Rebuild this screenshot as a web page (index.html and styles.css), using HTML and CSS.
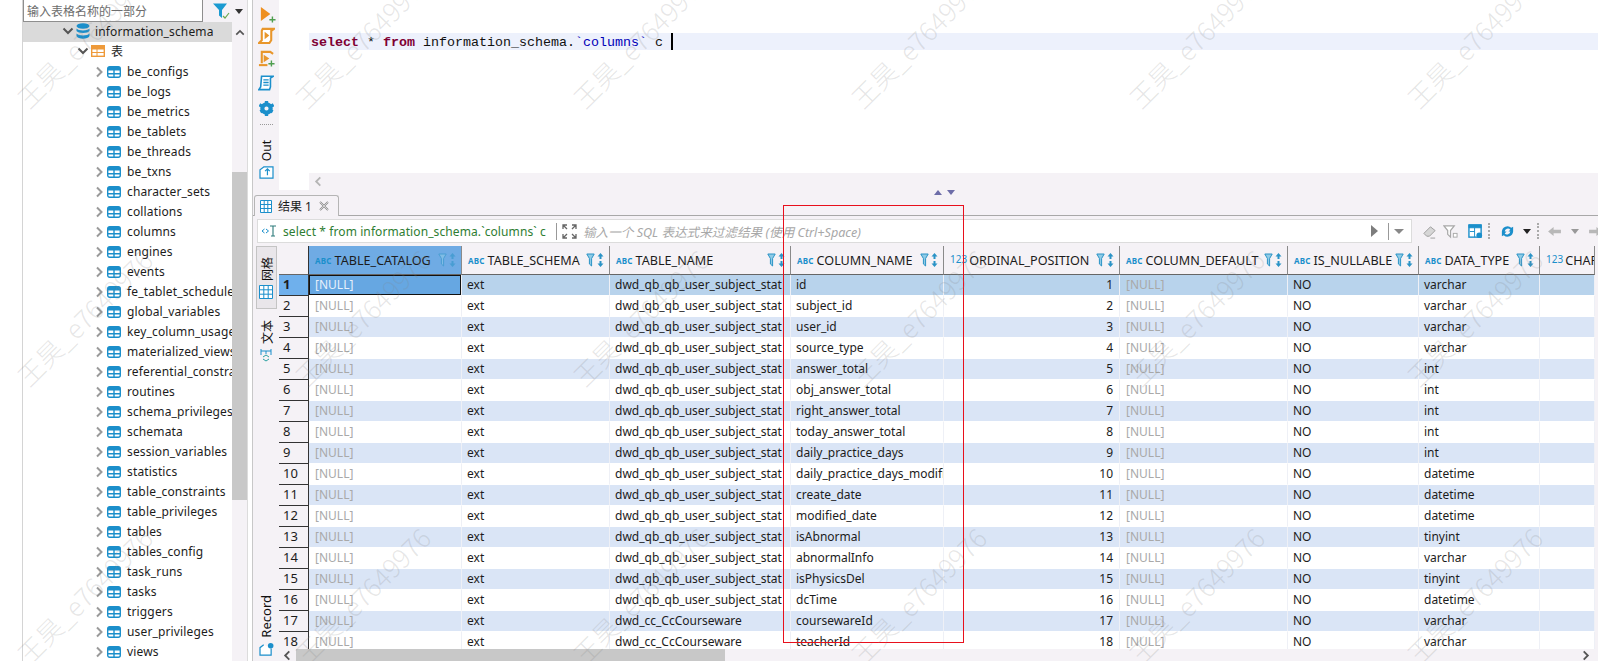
FILE: index.html
```html
<!DOCTYPE html>
<html lang="zh">
<head>
<meta charset="utf-8">
<title>information_schema.columns</title>
<link rel="stylesheet" href="styles.css">
</head>
<body>
<svg class="defs" aria-hidden="true">
  <symbol id="chev" viewBox="0 0 8 12"><path d="M2 1.500 6.500 6 2 10.500" fill="none" stroke="#9a9a9a" stroke-width="2"/></symbol>
  <symbol id="chevd" viewBox="0 0 12 8"><path d="M1.500 1.500 6 6l4.500-4.500" fill="none" stroke="#555" stroke-width="2"/></symbol>
  <symbol id="tbl" viewBox="0 0 14 12"><rect x=".7" y=".7" width="12.600" height="10.600" rx="2" fill="#fff" stroke="#1b8fcb" stroke-width="1.400"/><path d="M1 1h12v3.500H1z" fill="#1b8fcb"/><path d="M1 7.700h12M7 4v7" stroke="#1b8fcb" stroke-width="1.400"/></symbol>
  <symbol id="flt" viewBox="0 0 9 14"><path d="M.8 1h7.400L5.600 5.500V13L3.400 11V5.500z" fill="#8fcbe6" stroke="#2a93c6"/></symbol>
  <symbol id="srt" viewBox="0 0 7 14"><path d="M3.500 0 6.500 3.500h-2v2.500h-2V3.500h-2z" fill="#2a93c6"/><path d="M3.500 14 .5 10.500h2V8h2v2.500h2z" fill="#2a93c6"/></symbol>
</svg>

<div class="app">
  <div class="rail"></div>

  <aside class="nav">
    <div class="nav-search">
      <input class="search" type="text" placeholder="输入表格名称的一部分">
      <svg class="i-filter" viewBox="0 0 18 18"><path d="M1 1.500h14L10 8v8L7 13.500V8z" fill="#1b9ad1"/><path d="M11 14l2 2 4-5" fill="none" stroke="#6aa84f" stroke-width="1.200"/></svg>
      <span class="caret-down"></span>
    </div>
    <div class="nav-body">
      <ul class="tree">
        <li class="tree-db">
          <svg class="i-chev-d"><use href="#chevd"/></svg>
          <svg class="i-db" viewBox="0 0 14 16"><ellipse cx="7" cy="3" rx="6.500" ry="2.800" fill="#1b8fcb"/><path d="M.5 5.500C2 8 12 8 13.500 5.500V8C12 10.500 2 10.500 .5 8zM.5 10.500C2 13 12 13 13.500 10.500V13C12 16.500 2 16.500 .5 13z" fill="#1b8fcb"/></svg>
          information_schema
        </li>
        <li class="tree-group">
          <svg class="i-chev-d"><use href="#chevd"/></svg>
          <svg class="i-folder" viewBox="0 0 14 12"><rect x=".7" y=".7" width="12.600" height="10.600" fill="#fff" stroke="#ee9a3a" stroke-width="1.400"/><path d="M1 1h12v3H1zM1 7.500h12M6 4v7" fill="#ee9a3a" stroke="#ee9a3a"/></svg>
          表
        </li>
        <li><svg class="i-chev"><use href="#chev"/></svg><svg class="i-tbl"><use href="#tbl"/></svg>be_configs</li>
        <li><svg class="i-chev"><use href="#chev"/></svg><svg class="i-tbl"><use href="#tbl"/></svg>be_logs</li>
        <li><svg class="i-chev"><use href="#chev"/></svg><svg class="i-tbl"><use href="#tbl"/></svg>be_metrics</li>
        <li><svg class="i-chev"><use href="#chev"/></svg><svg class="i-tbl"><use href="#tbl"/></svg>be_tablets</li>
        <li><svg class="i-chev"><use href="#chev"/></svg><svg class="i-tbl"><use href="#tbl"/></svg>be_threads</li>
        <li><svg class="i-chev"><use href="#chev"/></svg><svg class="i-tbl"><use href="#tbl"/></svg>be_txns</li>
        <li><svg class="i-chev"><use href="#chev"/></svg><svg class="i-tbl"><use href="#tbl"/></svg>character_sets</li>
        <li><svg class="i-chev"><use href="#chev"/></svg><svg class="i-tbl"><use href="#tbl"/></svg>collations</li>
        <li><svg class="i-chev"><use href="#chev"/></svg><svg class="i-tbl"><use href="#tbl"/></svg>columns</li>
        <li><svg class="i-chev"><use href="#chev"/></svg><svg class="i-tbl"><use href="#tbl"/></svg>engines</li>
        <li><svg class="i-chev"><use href="#chev"/></svg><svg class="i-tbl"><use href="#tbl"/></svg>events</li>
        <li><svg class="i-chev"><use href="#chev"/></svg><svg class="i-tbl"><use href="#tbl"/></svg>fe_tablet_schedule</li>
        <li><svg class="i-chev"><use href="#chev"/></svg><svg class="i-tbl"><use href="#tbl"/></svg>global_variables</li>
        <li><svg class="i-chev"><use href="#chev"/></svg><svg class="i-tbl"><use href="#tbl"/></svg>key_column_usage</li>
        <li><svg class="i-chev"><use href="#chev"/></svg><svg class="i-tbl"><use href="#tbl"/></svg>materialized_views</li>
        <li><svg class="i-chev"><use href="#chev"/></svg><svg class="i-tbl"><use href="#tbl"/></svg>referential_constraints</li>
        <li><svg class="i-chev"><use href="#chev"/></svg><svg class="i-tbl"><use href="#tbl"/></svg>routines</li>
        <li><svg class="i-chev"><use href="#chev"/></svg><svg class="i-tbl"><use href="#tbl"/></svg>schema_privileges</li>
        <li><svg class="i-chev"><use href="#chev"/></svg><svg class="i-tbl"><use href="#tbl"/></svg>schemata</li>
        <li><svg class="i-chev"><use href="#chev"/></svg><svg class="i-tbl"><use href="#tbl"/></svg>session_variables</li>
        <li><svg class="i-chev"><use href="#chev"/></svg><svg class="i-tbl"><use href="#tbl"/></svg>statistics</li>
        <li><svg class="i-chev"><use href="#chev"/></svg><svg class="i-tbl"><use href="#tbl"/></svg>table_constraints</li>
        <li><svg class="i-chev"><use href="#chev"/></svg><svg class="i-tbl"><use href="#tbl"/></svg>table_privileges</li>
        <li><svg class="i-chev"><use href="#chev"/></svg><svg class="i-tbl"><use href="#tbl"/></svg>tables</li>
        <li><svg class="i-chev"><use href="#chev"/></svg><svg class="i-tbl"><use href="#tbl"/></svg>tables_config</li>
        <li><svg class="i-chev"><use href="#chev"/></svg><svg class="i-tbl"><use href="#tbl"/></svg>task_runs</li>
        <li><svg class="i-chev"><use href="#chev"/></svg><svg class="i-tbl"><use href="#tbl"/></svg>tasks</li>
        <li><svg class="i-chev"><use href="#chev"/></svg><svg class="i-tbl"><use href="#tbl"/></svg>triggers</li>
        <li><svg class="i-chev"><use href="#chev"/></svg><svg class="i-tbl"><use href="#tbl"/></svg>user_privileges</li>
        <li><svg class="i-chev"><use href="#chev"/></svg><svg class="i-tbl"><use href="#tbl"/></svg>views</li>
      </ul>
      <div class="vscroll">
        <svg class="i-up" viewBox="0 0 12 8"><path d="M1.500 6.500 6 2l4.500 4.500" fill="none" stroke="#555" stroke-width="2"/></svg>
        <div class="vthumb"></div>
      </div>
    </div>
  </aside>

  <div class="splitter"></div>

  <main class="main">
    <section class="top">
      <div class="tools">
        <svg class="tool t-run" viewBox="0 0 18 18"><path d="M2 1l10 7.500L2 16z" fill="#ee8f1f"/><path d="M11 14.500h6.500M14.200 11v6.500" stroke="#4f9e4f" stroke-width="1.500"/></svg>
        <svg class="tool t-script" viewBox="0 0 18 18"><path d="M5 2h12l-3 2v10l-2 3H1l3-3V4z" fill="#fff" stroke="#e8962b" stroke-width="2.200"/><path d="M7 5l5 4-5 4z" fill="#e8962b"/></svg>
        <svg class="tool t-scriptplus" viewBox="0 0 18 18"><path d="M4 14V2h9l3 2" fill="none" stroke="#e8962b" stroke-width="2.200"/><path d="M1 16h9" stroke="#e8962b" stroke-width="2.200"/><path d="M6 5l6 4-6 4z" fill="#e8962b"/><path d="M11 14.500h6.500M14.200 11v6.500" stroke="#4f9e4f" stroke-width="1.500"/></svg>
        <svg class="tool t-doc" viewBox="0 0 18 18"><path d="M4 2h13l-3 2v10l-1 3H1l2-3z" fill="#fff" stroke="#1b8fcb" stroke-width="1.800"/><path d="M6 6h6M6 9h6M6 12h6" stroke="#1b8fcb" stroke-width="1.500"/></svg>
        <svg class="tool t-gear" viewBox="0 0 18 18"><circle cx="9" cy="9" r="5" fill="none" stroke="#1b8fcb" stroke-width="5"/><path d="M9 0v18M.5 4.500l17 9M17.500 4.500l-17 9" stroke="#1b8fcb" stroke-width="4" stroke-dasharray="3.500 11"/></svg>
        <div class="dots"></div>
        <span class="vtext v-out">Out</span>
        <svg class="tool t-out" viewBox="0 0 16 14"><path d="M5 1 1 4v9h14V1z" fill="#fff" stroke="#1b8fcb" stroke-width="1.300"/><path d="M9 10V3M6.500 5.500 9 3l2.500 2.500" fill="none" stroke="#1b8fcb" stroke-width="1.300"/></svg>
      </div>
      <div class="editor">
        <div class="ruler"></div>
        <div class="edit-col">
          <div class="code-area">
            <div class="code-line"><b class="kw">select</b> * <b class="kw">from</b> information_schema.<span class="ident">`columns`</span> c <i class="cursor"></i></div>
          </div>
          <div class="edit-scroll">
            <svg class="i-left" viewBox="0 0 8 12"><path d="M6.500 1.500 2 6l4.500 4.500" fill="none" stroke="#b5b5b5" stroke-width="2"/></svg>
          </div>
        </div>
      </div>
    </section>

    <div class="sash"><span class="sash-up"></span><span class="sash-down"></span></div>

    <section class="results">
      <div class="tabbar">
        <div class="tab">
          <svg class="i-grid" viewBox="0 0 12 13"><path d="M.5.500h11v12H.5zM.5 4.500h11M.5 8.500h11M4.200.500v12M7.800.500v12" fill="#fff" stroke="#1b8fcb"/></svg>
          <span>结果 1</span>
          <svg class="i-close" viewBox="0 0 10 10"><path d="M1 1l8 8M9 1 1 9" fill="none" stroke="#8a8a8a" stroke-width="1.800"/><path d="M1 1l8 8M9 1 1 9" fill="none" stroke="#fff" stroke-width=".6"/></svg>
        </div>
      </div>
      <div class="filterbar">
        <div class="filter-box">
          <svg class="i-sqlt" viewBox="0 0 16 12"><path d="M3.500 4 1 6l2.500 2M5 4l2.500 2L5 8" fill="none" stroke="#1b8fcb"/><path d="M9 1h6M12 1v10M10 11h4" fill="none" stroke="#2c7a7a" stroke-width="1.100"/></svg>
          <span class="filter-sql">select * from information_schema.`columns` c</span>
          <i class="vsep"></i>
          <svg class="i-expand" viewBox="0 0 15 15"><path d="M1 5V1h4M1 1l4 4M10 1h4v4M14 1l-4 4M1 10v4h4M1 14l4-4M14 10v4h-4M14 14l-4-4" fill="none" stroke="#666" stroke-width="1.300"/></svg>
          <span class="filter-hint">输入一个 SQL 表达式来过滤结果 (使用 Ctrl+Space)</span>
          <span class="play"></span>
          <i class="vsep vsep-end"></i>
          <span class="drop-gray"></span>
        </div>
        <div class="rtools">
          <svg class="rt" viewBox="0 0 16 16"><path d="M2 10 9 3l5 4-6 6H5z" fill="#d6d6d6" stroke="#9b9b9b"/><path d="M9 15h5" stroke="#9b9b9b"/></svg>
          <svg class="rt rt-f" viewBox="0 0 16 16"><path d="M1 2h11L8 7v7L5 11V7z" fill="#fff" stroke="#a8a8a8" stroke-width="1.300"/><rect x="11" y="10" width="4" height="4" fill="#fff" stroke="#a8a8a8"/></svg>
          <svg class="rt rt-t" viewBox="0 0 16 16"><rect x="1" y="1" width="13" height="13" fill="#fff" stroke="#1b8fcb" stroke-width="1.500"/><path d="M1 1h13v3H1zM2 8h5M7 4v10" fill="#1b8fcb" stroke="#1b8fcb"/><circle cx="12" cy="12" r="3" fill="#1b8fcb"/></svg>
          <i class="dotv dv1"></i>
          <svg class="rt rt-r" viewBox="0 0 16 16"><path d="M2 8a6 6 0 0 1 10-4l2-1v5h-5l2-2a3.500 3.500 0 0 0-6 2zM14 8a6 6 0 0 1-10 4l-2 1V8h5l-2 2a3.500 3.500 0 0 0 6-2z" fill="#1b8fcb"/></svg>
          <span class="drop-dark"></span>
          <i class="dotv dv2"></i>
          <svg class="rt-arrow ra1" viewBox="0 0 16 12"><path d="M1 6l6-5v3h8v4H7v3z" fill="#b8b8b8"/></svg>
          <span class="drop-small"></span>
          <svg class="rt-arrow ra2" viewBox="0 0 16 12"><path d="M15 6 9 1v3H1v4h8v3z" fill="#b8b8b8"/></svg>
        </div>
      </div>

      <div class="grid-wrap">
        <div class="side">
          <div class="side-tab">
            <span class="vtext v-cn">网格</span>
            <svg class="i-sidegrid" viewBox="0 0 14 14"><path d="M.5.500h13v13H.5zM.5 4.800h13M.5 9.200h13M4.800.500v13M9.200.500v13" fill="#fff" stroke="#1b8fcb"/></svg>
          </div>
          <div class="side-text">
            <span class="vtext v-cn">文本</span>
            <svg class="i-sidetext" viewBox="0 0 12 14"><path d="M1 1v6M11 1v6M1 3h10M6 3v3" fill="none" stroke="#1b8fcb"/><path d="M3 9l3-2 3 2M3 11l3 2 3-2" fill="none" stroke="#2aa0a0"/></svg>
          </div>
          <div class="side-record">
            <span class="vtext v-rec">Record</span>
            <svg class="i-rec" viewBox="0 0 16 14"><path d="M5 2 1 5v8h12V6" fill="#fff" stroke="#1b8fcb" stroke-width="1.300"/><circle cx="12.500" cy="3" r="3" fill="#1b8fcb"/></svg>
          </div>
        </div>
        <div class="grid-col">
          <div class="grid-clip">
            <table class="grid">
              <colgroup><col class="c0"><col class="c1"><col class="c2"><col class="c3"><col class="c4"><col class="c5"><col class="c6"><col class="c7"><col class="c8"><col class="c9"></colgroup>
              <thead>
                <tr>
                  <th></th>
                  <th class="active"><span class="ty">ABC</span>TABLE_CATALOG<span class="hi"><svg class="f"><use href="#flt"/></svg><svg class="s"><use href="#srt"/></svg></span></th>
                  <th><span class="ty">ABC</span>TABLE_SCHEMA<span class="hi"><svg class="f"><use href="#flt"/></svg><svg class="s"><use href="#srt"/></svg></span></th>
                  <th><span class="ty">ABC</span>TABLE_NAME<span class="hi"><svg class="f"><use href="#flt"/></svg><svg class="s"><use href="#srt"/></svg></span></th>
                  <th><span class="ty">ABC</span>COLUMN_NAME<span class="hi"><svg class="f"><use href="#flt"/></svg><svg class="s"><use href="#srt"/></svg></span></th>
                  <th><span class="ty num">123</span>ORDINAL_POSITION<span class="hi"><svg class="f"><use href="#flt"/></svg><svg class="s"><use href="#srt"/></svg></span></th>
                  <th><span class="ty">ABC</span>COLUMN_DEFAULT<span class="hi"><svg class="f"><use href="#flt"/></svg><svg class="s"><use href="#srt"/></svg></span></th>
                  <th><span class="ty">ABC</span>IS_NULLABLE<span class="hi"><svg class="f"><use href="#flt"/></svg><svg class="s"><use href="#srt"/></svg></span></th>
                  <th><span class="ty">ABC</span>DATA_TYPE<span class="hi"><svg class="f"><use href="#flt"/></svg><svg class="s"><use href="#srt"/></svg></span></th>
                  <th><span class="ty num">123</span>CHAR</th>
                </tr>
              </thead>
              <tbody>
                <tr class="sel"><th>1</th><td class="nul cur">[NULL]</td><td>ext</td><td>dwd_qb_qb_user_subject_stat</td><td>id</td><td class="n">1</td><td class="nul">[NULL]</td><td>NO</td><td>varchar</td><td></td></tr>
                <tr><th>2</th><td class="nul">[NULL]</td><td>ext</td><td>dwd_qb_qb_user_subject_stat</td><td>subject_id</td><td class="n">2</td><td class="nul">[NULL]</td><td>NO</td><td>varchar</td><td></td></tr>
                <tr><th>3</th><td class="nul">[NULL]</td><td>ext</td><td>dwd_qb_qb_user_subject_stat</td><td>user_id</td><td class="n">3</td><td class="nul">[NULL]</td><td>NO</td><td>varchar</td><td></td></tr>
                <tr><th>4</th><td class="nul">[NULL]</td><td>ext</td><td>dwd_qb_qb_user_subject_stat</td><td>source_type</td><td class="n">4</td><td class="nul">[NULL]</td><td>NO</td><td>varchar</td><td></td></tr>
                <tr><th>5</th><td class="nul">[NULL]</td><td>ext</td><td>dwd_qb_qb_user_subject_stat</td><td>answer_total</td><td class="n">5</td><td class="nul">[NULL]</td><td>NO</td><td>int</td><td></td></tr>
                <tr><th>6</th><td class="nul">[NULL]</td><td>ext</td><td>dwd_qb_qb_user_subject_stat</td><td>obj_answer_total</td><td class="n">6</td><td class="nul">[NULL]</td><td>NO</td><td>int</td><td></td></tr>
                <tr><th>7</th><td class="nul">[NULL]</td><td>ext</td><td>dwd_qb_qb_user_subject_stat</td><td>right_answer_total</td><td class="n">7</td><td class="nul">[NULL]</td><td>NO</td><td>int</td><td></td></tr>
                <tr><th>8</th><td class="nul">[NULL]</td><td>ext</td><td>dwd_qb_qb_user_subject_stat</td><td>today_answer_total</td><td class="n">8</td><td class="nul">[NULL]</td><td>NO</td><td>int</td><td></td></tr>
                <tr><th>9</th><td class="nul">[NULL]</td><td>ext</td><td>dwd_qb_qb_user_subject_stat</td><td>daily_practice_days</td><td class="n">9</td><td class="nul">[NULL]</td><td>NO</td><td>int</td><td></td></tr>
                <tr><th>10</th><td class="nul">[NULL]</td><td>ext</td><td>dwd_qb_qb_user_subject_stat</td><td>daily_practice_days_modified</td><td class="n">10</td><td class="nul">[NULL]</td><td>NO</td><td>datetime</td><td></td></tr>
                <tr><th>11</th><td class="nul">[NULL]</td><td>ext</td><td>dwd_qb_qb_user_subject_stat</td><td>create_date</td><td class="n">11</td><td class="nul">[NULL]</td><td>NO</td><td>datetime</td><td></td></tr>
                <tr><th>12</th><td class="nul">[NULL]</td><td>ext</td><td>dwd_qb_qb_user_subject_stat</td><td>modified_date</td><td class="n">12</td><td class="nul">[NULL]</td><td>NO</td><td>datetime</td><td></td></tr>
                <tr><th>13</th><td class="nul">[NULL]</td><td>ext</td><td>dwd_qb_qb_user_subject_stat</td><td>isAbnormal</td><td class="n">13</td><td class="nul">[NULL]</td><td>NO</td><td>tinyint</td><td></td></tr>
                <tr><th>14</th><td class="nul">[NULL]</td><td>ext</td><td>dwd_qb_qb_user_subject_stat</td><td>abnormalInfo</td><td class="n">14</td><td class="nul">[NULL]</td><td>NO</td><td>varchar</td><td></td></tr>
                <tr><th>15</th><td class="nul">[NULL]</td><td>ext</td><td>dwd_qb_qb_user_subject_stat</td><td>isPhysicsDel</td><td class="n">15</td><td class="nul">[NULL]</td><td>NO</td><td>tinyint</td><td></td></tr>
                <tr><th>16</th><td class="nul">[NULL]</td><td>ext</td><td>dwd_qb_qb_user_subject_stat</td><td>dcTime</td><td class="n">16</td><td class="nul">[NULL]</td><td>NO</td><td>datetime</td><td></td></tr>
                <tr><th>17</th><td class="nul">[NULL]</td><td>ext</td><td>dwd_cc_CcCourseware</td><td>coursewareId</td><td class="n">17</td><td class="nul">[NULL]</td><td>NO</td><td>varchar</td><td></td></tr>
                <tr><th>18</th><td class="nul">[NULL]</td><td>ext</td><td>dwd_cc_CcCourseware</td><td>teacherId</td><td class="n">18</td><td class="nul">[NULL]</td><td>NO</td><td>varchar</td><td></td></tr>
              </tbody>
            </table>
          </div>
          <div class="hscroll">
            <svg class="i-hl" viewBox="0 0 8 12"><path d="M6.500 1.500 2 6l4.500 4.500" fill="none" stroke="#555" stroke-width="2"/></svg>
            <div class="hthumb"></div>
            <svg class="i-hr" viewBox="0 0 8 12"><path d="M1.500 1.500 6 6l-4.500 4.500" fill="none" stroke="#555" stroke-width="2"/></svg>
          </div>
        </div>
      </div>
    </section>
  </main>

  <div class="redbox"></div>

  <div class="watermarks" aria-hidden="true">
    <span>王昊_e7649976</span><span>王昊_e7649976</span><span>王昊_e7649976</span><span>王昊_e7649976</span><span>王昊_e7649976</span><span>王昊_e7649976</span>
    <span>王昊_e7649976</span><span>王昊_e7649976</span><span>王昊_e7649976</span><span>王昊_e7649976</span><span>王昊_e7649976</span><span>王昊_e7649976</span>
    <span>王昊_e7649976</span><span>王昊_e7649976</span><span>王昊_e7649976</span><span>王昊_e7649976</span><span>王昊_e7649976</span><span>王昊_e7649976</span>
  </div>
</div>
</body>
</html>
```
FILE: styles.css
```css
* { box-sizing: border-box; }
html, body { margin: 0; padding: 0; height: 100%; overflow: hidden; }
body {
  font-family: "Noto Sans", "Noto Sans CJK SC", sans-serif;
  font-size: 12px;
  color: #1c1c1c;
  background: #f5f2f6;
}
.defs { width: 0; height: 0; display: block; }

.app { position: relative; display: flex; width: 1598px; height: 661px; overflow: hidden; }

.rail { width: 23px; flex: none; background: #fff; border-right: 1px solid #d4d4d4; }

/* navigator */
.nav { width: 224px; flex: none; display: flex; flex-direction: column; background: #fff; }
.nav-search { height: 22px; flex: none; display: flex; align-items: center; background: #f5f2f6; }
.search {
  width: 180px; height: 22px; margin: 0; padding: 0 3px;
  border: 1px solid #8e8e8e; border-top: 0; background: #fff;
  font: 12px "Noto Sans CJK SC", sans-serif; color: #555; outline: 0;
}
.search::placeholder { color: #6d6d6d; }
.i-filter { width: 18px; height: 18px; margin-left: 9px; }
.caret-down { width: 0; height: 0; margin-left: 5px; border: 4px solid transparent; border-top: 5px solid #333; border-bottom: 0; }
.nav-body { flex: 1; min-height: 0; display: flex; }
.tree { width: 209px; flex: none; margin: 0; padding: 0; list-style: none; overflow: hidden; background: #fff; }
.tree li { height: 20px; display: flex; align-items: center; padding: 0 0 2px 72px; white-space: nowrap; overflow: hidden; font-size: 12px; letter-spacing: .15px; }
.tree .tree-db { padding-left: 39px; background: #dadada; }
.tree .tree-group { padding-left: 54px; }
.i-chev { width: 8px; height: 12px; flex: none; margin: 2px 4px 0 0; }
.i-chev-d { width: 12px; height: 8px; flex: none; margin-right: 2px; }
.i-tbl { width: 14px; height: 12px; flex: none; margin: 2px 6px 0 0; }
.i-db { width: 14px; height: 16px; flex: none; margin-right: 5px; }
.i-folder { width: 14px; height: 12px; flex: none; margin-right: 6px; }
.vscroll { width: 15px; flex: none; background: #f5f2f6; display: flex; flex-direction: column; align-items: center; }
.i-up { width: 10px; height: 7px; margin-top: 7px; flex: none; }
.vthumb { width: 15px; height: 328px; margin-top: 136px; background: #c8c8c8; flex: none; }

.splitter { width: 6px; flex: none; background: #fff; border-left: 1px solid #dcdcdc; border-right: 1px solid #c8c8c8; }

/* main */
.main { flex: 1; min-width: 0; display: flex; flex-direction: column; }
.top { height: 190px; flex: none; display: flex; }
.tools { width: 26px; flex: none; display: flex; flex-direction: column; align-items: center; }
.tool { display: block; flex: none; }
.t-run { width: 17px; height: 17px; margin: 6px 0 0 2px; }
.t-script { width: 17px; height: 17px; margin-top: 4px; }
.t-scriptplus { width: 17px; height: 17px; margin-top: 6px; }
.t-doc { width: 16px; height: 17px; margin-top: 7px; }
.t-gear { width: 15px; height: 15px; margin-top: 10px; }
.dots { width: 13px; height: 0; margin-top: 8px; border-top: 1px dotted #999; flex: none; }
.vtext { writing-mode: vertical-rl; transform: rotate(180deg); display: block; flex: none; color: #111; }
.v-out { margin-top: 15px; font-size: 12px; }
.t-out { width: 15px; height: 13px; margin-top: 5px; }
.editor { flex: 1; display: flex; background: #fff; }
.ruler { width: 30px; flex: none; background: #fff; }
.edit-col { flex: 1; display: flex; flex-direction: column; min-width: 0; }
.code-area { flex: 1; background: #fff; padding-top: 33px; }
.code-line {
  height: 17px; background: #edf1fc; padding-left: 2px;
  font: 13.33px/19px "Liberation Mono", monospace; color: #111; white-space: pre;
}
.kw { color: #7f0033; font-weight: bold; }
.ident { color: #0000b8; }
.cursor { display: inline-block; width: 2px; height: 17px; background: #000; vertical-align: top; }
.edit-scroll { height: 17px; flex: none; background: #f5f2f6; display: flex; align-items: center; padding-left: 5px; }
.i-left { width: 8px; height: 11px; }

.sash { height: 5px; flex: none; position: relative; display: flex; justify-content: flex-start; gap: 5px; padding-left: 681px; }
.sash-up { width: 0; height: 0; border: 4px solid transparent; border-bottom: 5px solid #6d6da8; border-top: 0; }
.sash-down { width: 0; height: 0; border: 4px solid transparent; border-top: 5px solid #6d6da8; border-bottom: 0; }

.results { flex: 1; min-height: 0; display: flex; flex-direction: column; }
.tabbar { height: 21px; flex: none; display: flex; border-bottom: 1px solid #a8a8a8; padding-left: 1px; }
.tab {
  width: 85px; height: 21px; display: flex; align-items: center; gap: 6px; padding-left: 5px;
  background: #f5f2f6; border: 1px solid #b5b5b5; border-bottom: 0; border-radius: 3px 3px 0 0;
  font-size: 12px;
}
.i-grid { width: 12px; height: 13px; flex: none; }
.i-close { width: 10px; height: 10px; flex: none; margin-left: 1px; }
.filterbar { height: 24px; flex: none; margin-top: 3px; display: flex; padding-left: 4px; }
.filter-box {
  width: 1155px; height: 24px; flex: none; display: flex; align-items: center;
  background: #fff; border: 1px solid #dcdcdc; padding-left: 3px;
}
.i-sqlt { width: 16px; height: 12px; flex: none; }
.filter-sql { margin-left: 6px; color: #2e7d32; white-space: nowrap; width: 273px; flex: none; letter-spacing: .1px; }
.vsep { width: 1px; height: 17px; background: #999; flex: none; }
.i-expand { width: 15px; height: 15px; flex: none; margin-left: 5px; }
.filter-hint { margin-left: 6px; color: #a8a8a8; font-style: italic; white-space: nowrap; flex: 1; font-size: 12.6px; }
.play { width: 0; height: 0; border: 6px solid transparent; border-left: 7px solid #7d7d7d; border-right: 0; flex: none; }
.vsep-end { margin-left: 10px; }
.drop-gray { width: 0; height: 0; border: 5px solid transparent; border-top: 5px solid #888; border-bottom: 0; margin: 0 7px 0 5px; flex: none; }
.drop-small { width: 0; height: 0; border: 4px solid transparent; border-top: 5px solid #999; border-bottom: 0; margin-left: 9px; flex: none; }
.drop-dark { width: 0; height: 0; border: 4px solid transparent; border-top: 5px solid #222; border-bottom: 0; margin-left: 8px; flex: none; }
.rtools { flex: 1; display: flex; align-items: center; padding-left: 10px; overflow: hidden; }
.rt { width: 15px; height: 15px; flex: none; }
.rt-f { margin-left: 6px; }
.rt-t { margin-left: 10px; }
.rt-r { margin-left: 10px; }
.dotv { width: 0; height: 16px; border-left: 2px dotted #aaa; flex: none; }
.dv1 { margin-left: 5px; }
.dv2 { margin-left: 6px; }
.rt-arrow { width: 15px; height: 11px; flex: none; }
.ra1 { margin-left: 8px; }
.ra2 { margin-left: 9px; }

.grid-wrap { flex: 1; min-height: 0; display: flex; margin-top: 3px; }
.side { width: 26px; flex: none; display: flex; flex-direction: column; align-items: center; }
.side-tab {
  width: 21px; height: 63px; flex: none; margin-top: 0; background: #e9e6ea; border: 1px solid #c4c4c4;
  display: flex; flex-direction: column; align-items: center; gap: 4px; padding-top: 10px;
}
.v-cn { font-family: "Noto Sans CJK SC", sans-serif; font-size: 12px; line-height: 13px; text-orientation: sideways; }
.i-sidegrid { width: 14px; height: 14px; flex: none; }
.side-text { margin-top: 11px; display: flex; flex-direction: column; align-items: center; gap: 4px; }
.i-sidetext { width: 12px; height: 14px; flex: none; }
.side-record { margin-top: auto; display: flex; flex-direction: column; align-items: center; gap: 5px; padding-bottom: 5px; }
.v-rec { font-size: 13px; }
.i-rec { width: 15px; height: 13px; flex: none; }

.grid-col { flex: 1; min-width: 0; display: flex; flex-direction: column; }
.grid-clip { flex: 1; min-height: 0; overflow: hidden; }
.grid { table-layout: fixed; width: 1316px; border-collapse: separate; border-spacing: 0; font-size: 12px; }
.c0 { width: 30px; } .c1 { width: 153px; } .c2 { width: 148px; } .c3 { width: 181px; } .c4 { width: 153px; }
.c5 { width: 176px; } .c6 { width: 168px; } .c7 { width: 131px; } .c8 { width: 121px; } .c9 { width: 55px; }
thead th {
  position: relative; height: 29px; padding: 0 0 0 6px; text-align: left; font-weight: 400; white-space: nowrap; overflow: hidden;
  background: #f5f2f6; border-right: 1px solid #8a8a8a; border-bottom: 1px solid #666; font-size: 12.6px;
}
thead th:first-child { border-right: 1px solid #333; }
thead th.active { background: #6fabe4; }
thead th.active .hi { opacity: .55; }
.ty { font-size: 8px; font-weight: 700; color: #1b8fcb; letter-spacing: .2px; margin-right: 3px; vertical-align: 1px; }
.ty.num { font-size: 10px; font-weight: 400; letter-spacing: 0; margin-right: 2px; vertical-align: 2px; }
.hi { position: absolute; right: 5px; top: 7px; display: flex; gap: 2px; }
.f { width: 9px; height: 14px; }
.s { width: 7px; height: 14px; }
tbody th {
  height: 21px; padding: 0 0 2px 4px; text-align: left; font-weight: 400; font-size: 13px;
  background: #f5f2f6; border-right: 1px solid #333; border-bottom: 1px solid #333;
}
tbody td {
  height: 21px; padding: 0 6px 2px 5px; white-space: nowrap; overflow: hidden;
  border-right: 1px solid #eef0f6; border-bottom: 1px solid #fff;
}
tbody tr:nth-child(odd) td { background: #dae5f6; }
tbody tr:nth-child(even) td { background: #fff; }
tbody tr.sel td { background: #b8d3ec; }
tbody tr.sel th { background: #6fb0ec; font-weight: 700; }
td.nul { color: #a9a9a9; padding-left: 6px; }
td.n { text-align: right; }
tbody tr.sel td.cur { background: #66a7e2; color: #e6f0fb; box-shadow: inset 0 0 0 1px #111; }

.hscroll { height: 12px; flex: none; display: flex; align-items: center; }
.i-hl { width: 8px; height: 11px; flex: none; margin-left: 4px; }
.hthumb { width: 429px; height: 12px; flex: none; margin-left: 5px; background: #c8c8c8; }
.i-hr { width: 8px; height: 11px; flex: none; margin-left: auto; margin-right: 8px; }

/* overlays */
.redbox { position: absolute; left: 783px; top: 205px; width: 181px; height: 438px; border: 1px solid #e8101c; pointer-events: none; }
.watermarks {
  position: absolute; left: 32px; top: -195px; display: grid; grid-template-columns: repeat(6, 278px); grid-auto-rows: 278px;
  pointer-events: none;
}
.watermarks span {
  display: block; width: max-content; height: 30px; margin-top: 278px;
  font-family: "Noto Sans CJK SC", "Noto Sans", sans-serif; font-size: 26px; line-height: 30px; font-weight: 300;
  color: rgba(130, 130, 130, .2); transform-origin: 0 100%; transform: rotate(-45deg);
}
```
